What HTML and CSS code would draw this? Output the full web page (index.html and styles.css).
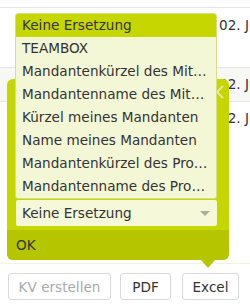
FILE: index.html
```html
<!DOCTYPE html>
<html lang="de">
<head>
<meta charset="utf-8">
<link rel="stylesheet" href="styles.css">
</head>
<body>
<div class="page">
  <div class="table">
    <div class="row row-top"></div>
    <div class="row row-a"><span class="date">02. Juni 2023</span></div>
    <div class="row row-b"><span class="date">02. Juni 2023</span></div>
    <div class="row row-c"><span class="date date-c">02. Juni 2023</span></div>
  </div>
  <div class="bar">
    <button class="btn btn-disabled">KV erstellen</button>
    <button class="btn btn-pdf">PDF</button>
    <button class="btn btn-excel">Excel</button>
  </div>

  <div class="popup">
    <svg class="close" width="12" height="14" viewBox="0 0 12 14"><polyline points="8,1 2,7 8,13" fill="none" stroke="#e3ea9a" stroke-width="2"/></svg>
    <div class="popup-body">
      <div class="select">
        <span class="select-text">Keine Ersetzung</span>
        <span class="caret"></span>
      </div>
    </div>
    <div class="popup-foot">OK</div>
    <span class="pointer"></span>
  </div>

  <ul class="list">
    <li class="item item-active">Keine Ersetzung</li>
    <li class="item">TEAMBOX</li>
    <li class="item">Mandantenkürzel des Mitarbeiters</li>
    <li class="item">Mandantenname des Mitarbeiters</li>
    <li class="item">Kürzel meines Mandanten</li>
    <li class="item">Name meines Mandanten</li>
    <li class="item">Mandantenkürzel des Projekts</li>
    <li class="item">Mandantenname des Projekts</li>
  </ul>
</div>
</body>
</html>
```

FILE: styles.css
```css
* { box-sizing: border-box; }
html, body { margin: 0; padding: 0; }
body {
  background: #fff;
  font-family: "DejaVu Sans", "Noto Sans", sans-serif;
  font-size: 13.6px;
  color: #333;
}
.page {
  position: relative;
  width: 250px;
  height: 308px;
  overflow: hidden;
  display: flex;
  flex-direction: column;
}
.table {
  flex: 1;
  display: flex;
  flex-direction: column;
}
.row {
  border-bottom: 1px solid #e6e6e6;
  padding-left: 219px;
  white-space: nowrap;
  line-height: 18px;
}
.row-top { height: 8px; }
.row-a { height: 60px; padding-top: 8px; }
.row-b { height: 34px; padding-top: 7px; background: #f7f7f5; }
.row-c { flex: 1; border-bottom: none; padding-top: 7px; }
.date { color: #333; }
.bar {
  border-top: 1px solid #f1f3dc;
  padding: 9px 8px 8px;
  display: flex;
  gap: 9px;
}
.btn {
  height: 27px;
  padding: 0;
  border: 1px solid #d9d9d9;
  border-radius: 3px;
  background: #fff;
  font-family: inherit;
  font-size: 13.6px;
  color: #333;
  white-space: nowrap;
}
.btn-disabled { width: 103px; color: #aaa; }
.btn-pdf { width: 51px; }
.btn-excel { width: 57px; margin-left: 2px; }

.popup {
  position: absolute;
  left: 7px;
  top: 79px;
  width: 222px;
  height: 181px;
  background: #c6d600;
  border-radius: 6px;
  display: flex;
  flex-direction: column;
}
.close {
  position: absolute;
  right: 2px;
  top: 6px;
}
.popup-body {
  flex: 1;
  display: flex;
  flex-direction: column;
  justify-content: flex-end;
  padding: 0 12px 4px 9px;
}
.select {
  height: 26px;
  background: #f5f8d9;
  border-radius: 2px;
  display: flex;
  align-items: center;
  justify-content: space-between;
  padding: 0 7px 0 6px;
}
.caret {
  width: 0;
  height: 0;
  border-left: 5px solid transparent;
  border-right: 5px solid transparent;
  border-top: 5px solid #a9ad9a;
}
.popup-foot {
  height: 30px;
  background: #b5c600;
  border-radius: 0 0 6px 6px;
  padding-left: 9px;
  line-height: 30px;
  color: #333;
}
.pointer {
  position: absolute;
  left: 194px;
  bottom: -8px;
  width: 0;
  height: 0;
  border-left: 7px solid transparent;
  border-right: 7px solid transparent;
  border-top: 8px solid #b5c600;
}

.list {
  position: absolute;
  left: 15px;
  top: 13px;
  width: 202px;
  margin: 0;
  padding: 0;
  list-style: none;
  background: #f4f7d6;
  border: 1px solid #d6df86;
  border-radius: 3px;
  overflow: hidden;
}
.item {
  height: 23px;
  line-height: 23px;
  padding: 0 8px 0 6px;
  white-space: nowrap;
  overflow: hidden;
  text-overflow: ellipsis;
}
.item-active { background: #c6d600; }
```
